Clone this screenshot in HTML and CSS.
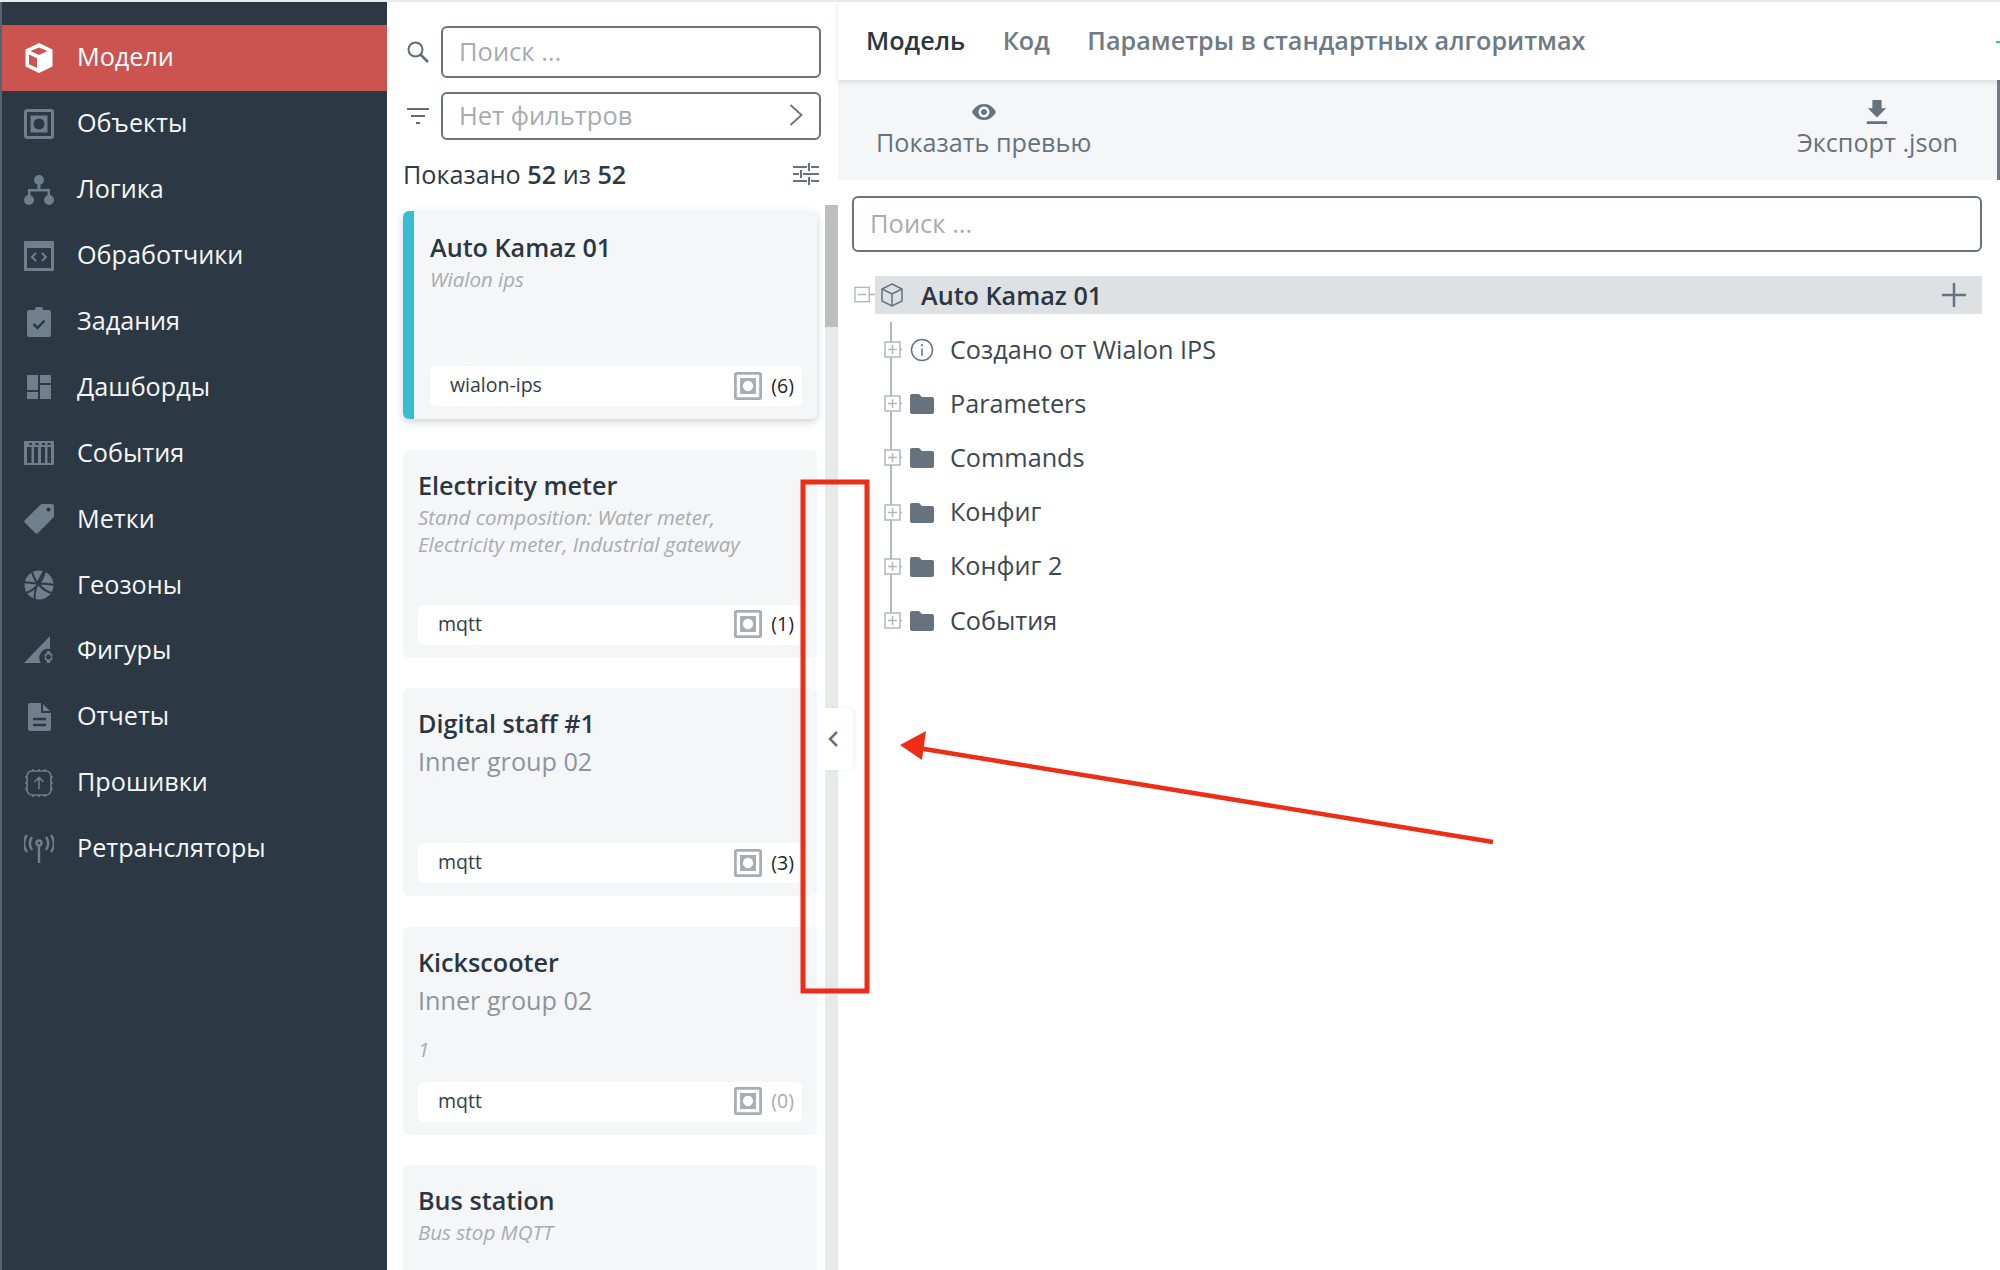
FILE: index.html
```html
<!DOCTYPE html>
<html lang="ru">
<head>
<meta charset="utf-8">
<title>Модели</title>
<link rel="stylesheet" href="styles.css">
</head>
<body>
<svg class="defs" width="0" height="0" aria-hidden="true">
  <symbol id="i-object" viewBox="0 0 30 30">
    <path fill-rule="evenodd" d="M3 0h24a3 3 0 0 1 3 3v24a3 3 0 0 1-3 3H3a3 3 0 0 1-3-3V3a3 3 0 0 1 3-3zm0 3v24h24V3zm3.500 3.500h17v17h-17zM15 9.500a5.500 5.500 0 1 0 .01 0z"/>
  </symbol>
  <symbol id="i-folder" viewBox="0 0 24 20">
    <path d="M2 0h7l3 3h10a2 2 0 0 1 2 2v13a2 2 0 0 1-2 2H2a2 2 0 0 1-2-2V2a2 2 0 0 1 2-2z"/>
  </symbol>
  <symbol id="i-plus" viewBox="0 0 18 18">
    <rect x="1" y="1" width="15" height="15" fill="#fff" stroke="#b4b8bc" stroke-width="1.500"/>
    <path d="M4 8.500h9M8.500 4v9M16 8.500h2" fill="none" stroke="#b4b8bc" stroke-width="1.500"/>
  </symbol>
</svg>

<div class="app">
  <nav class="sidebar">
    <a class="nav-item active"><svg class="nav-icon" viewBox="0 0 30 30"><path fill-rule="evenodd" d="M15 0l13.500 6.500v17L15 30 1.500 23.500v-17zM6.500 8L15 12l8.500-4L15 4.500zM5 11.500v9.800l8 3.800v-9.800z"/></svg><span>Модели</span></a>
    <a class="nav-item"><svg class="nav-icon"><use href="#i-object"/></svg><span>Объекты</span></a>
    <a class="nav-item"><svg class="nav-icon" viewBox="0 0 30 30"><circle cx="15" cy="5" r="5"/><circle cx="5" cy="25" r="5"/><circle cx="25" cy="25" r="5"/><path d="M13.500 8h3v6H26v8h-2.500v-5.500h-17V22H4v-8h9.500z"/></svg><span>Логика</span></a>
    <a class="nav-item"><svg class="nav-icon" viewBox="0 0 30 30"><path fill-rule="evenodd" d="M1 0h28a1 1 0 0 1 1 1v28a1 1 0 0 1-1 1H1a1 1 0 0 1-1-1V1a1 1 0 0 1 1-1zm2 7v20h24V7z"/><path class="line" d="M12 12l-4 4 4 4M18 12l4 4-4 4"/></svg><span>Обработчики</span></a>
    <a class="nav-item"><svg class="nav-icon" viewBox="0 0 30 30"><path d="M5 3h6a4 4 0 0 1 8 0h6a2 2 0 0 1 2 2v23a2 2 0 0 1-2 2H5a2 2 0 0 1-2-2V5a2 2 0 0 1 2-2z"/><path class="cut" d="M9.500 17l4 4 7-7.500"/></svg><span>Задания</span></a>
    <a class="nav-item"><svg class="nav-icon" viewBox="0 0 30 30"><path d="M3 3h11v15H3zM16 3h11v8H16zM16 13h11v14H16zM3 20h11v7H3z"/></svg><span>Дашборды</span></a>
    <a class="nav-item"><svg class="nav-icon" viewBox="0 0 30 30"><path fill-rule="evenodd" d="M1 3h28a1 1 0 0 1 1 1v22a1 1 0 0 1-1 1H1a1 1 0 0 1-1-1V4a1 1 0 0 1 1-1zm2 6v16h4.500V9zm7 0v16h4V9zm7 0v16h4V9zm6.500 0v16H27V9zM5 5v2h3V5zm6.500 0v2h3V5zm6.500 0v2h3V5zm5.500 0v2h3V5z"/></svg><span>События</span></a>
    <a class="nav-item"><svg class="nav-icon" viewBox="0 0 30 30"><path fill-rule="evenodd" d="M18 0h10a2 2 0 0 1 2 2v10a2 2 0 0 1-.6 1.400L14 29a2 2 0 0 1-2.800 0L1 18.800a2 2 0 0 1 0-2.800L16.600.6A2 2 0 0 1 18 0zm6.500 3.500a2 2 0 1 0 .01 0z"/></svg><span>Метки</span></a>
    <a class="nav-item"><svg class="nav-icon" viewBox="0 0 30 30"><circle cx="15" cy="15" r="14.500"/><path class="cut thin" d="M2 23C11 20 19 11 21 1M8 2c2 8 10 19 20 21M0 12c8 2 21 1 30 3M11 30c-2-8 4-21 9-29"/></svg><span>Геозоны</span></a>
    <a class="nav-item"><svg class="nav-icon" viewBox="0 0 30 30"><path d="M26 0v13a9 9 0 0 0-9 14H0z"/><path fill-rule="evenodd" d="M23 15h3l.6 2.500 2 1-.8 2.500.8 2.500-2 1L26 27h-3l-.6-2.500-2-1 .8-2.500-.8-2.500 2-1zm1.500 3.500a2.500 2.500 0 1 0 .01 0z"/></svg><span>Фигуры</span></a>
    <a class="nav-item"><svg class="nav-icon" viewBox="0 0 30 30"><path d="M6 1h12l9 9v17a2 2 0 0 1-2 2H6a2 2 0 0 1-2-2V3a2 2 0 0 1 2-2z"/><path class="cut" d="M9 17h13M9 23h13"/><path class="cut thin" d="M18 1v9h9"/></svg><span>Отчеты</span></a>
    <a class="nav-item"><svg class="nav-icon outline" viewBox="0 0 30 30"><rect x="3" y="3" width="24" height="24" rx="5"/><path d="M15 21V10M10.500 14l4.500-4.500 4.500 4.500M9 1v2M15 1v2M21 1v2M9 27v2M15 27v2M21 27v2M1 9h2M1 15h2M1 21h2M27 9h2M27 15h2M27 21h2"/></svg><span>Прошивки</span></a>
    <a class="nav-item"><svg class="nav-icon outline thick" viewBox="0 0 30 30"><circle cx="15" cy="9" r="2.500"/><path d="M15 11v18M8 3c-3 4-3 8 0 13M22 3c3 4 3 8 0 13M3 1C-1 6-1 13 3 18M27 1c4 5 4 12 0 17"/></svg><span>Ретрансляторы</span></a>
  </nav>

  <section class="list">
    <div class="field-row">
      <svg class="field-icon" viewBox="0 0 24 24"><circle cx="9.500" cy="9.500" r="7"/><path d="M14.500 14.500L22 22" stroke-width="2.500"/></svg>
      <div class="field search">Поиск ...</div>
    </div>
    <div class="field-row filter-row">
      <svg class="field-icon" viewBox="0 0 24 24"><path d="M1 5h22M5 12h14M10 19h4"/></svg>
      <div class="field filter">Нет фильтров<svg class="chevron" viewBox="0 0 14 22"><path d="M1.500 1L12.500 11 1.500 21"/></svg></div>
    </div>
    <div class="count-row">
      <span>Показано <b>52</b> из <b>52</b></span>
      <svg class="sliders" viewBox="0 0 26 24"><path d="M0 5h14M18 5h8M16 1v8M0 12h6M10 12h16M8 8v8M0 19h14M18 19h8M16 15v8"/></svg>
    </div>
    <div class="cards-area">
      <div class="cards">
        <article class="card selected">
          <h3>Auto Kamaz 01</h3>
          <p class="desc">Wialon ips</p>
          <div class="card-foot"><span>wialon-ips</span><svg class="obj"><use href="#i-object"/></svg><span class="num">(6)</span></div>
        </article>
        <article class="card">
          <h3>Electricity meter</h3>
          <p class="desc">Stand composition: Water meter,<br>Electricity meter, Industrial gateway</p>
          <div class="card-foot"><span>mqtt</span><svg class="obj"><use href="#i-object"/></svg><span class="num">(1)</span></div>
        </article>
        <article class="card">
          <h3>Digital staff #1</h3>
          <p class="group">Inner group 02</p>
          <div class="card-foot"><span>mqtt</span><svg class="obj"><use href="#i-object"/></svg><span class="num">(3)</span></div>
        </article>
        <article class="card">
          <h3>Kickscooter</h3>
          <p class="group">Inner group 02</p>
          <p class="desc note">1</p>
          <div class="card-foot"><span>mqtt</span><svg class="obj"><use href="#i-object"/></svg><span class="num zero">(0)</span></div>
        </article>
        <article class="card">
          <h3>Bus station</h3>
          <p class="desc">Bus stop MQTT</p>
        </article>
      </div>
      <div class="scrollbar"><div class="thumb"></div></div>
    </div>
    <button class="collapse" type="button"><svg viewBox="0 0 12 18"><path d="M10 2L3 9l7 7"/></svg></button>
  </section>

  <main class="main">
    <div class="tabs">
      <span class="tab current">Модель</span>
      <span class="tab">Код</span>
      <span class="tab">Параметры в стандартных алгоритмах</span>
      <i class="tick"></i>
    </div>
    <div class="toolbar">
      <div class="tool">
        <svg class="tool-icon" viewBox="0 0 24 16"><path fill-rule="evenodd" d="M12 0c5.500 0 9.500 3.500 12 8-2.500 4.500-6.500 8-12 8S2.500 12.500 0 8c2.500-4.500 6.500-8 12-8zm0 2.500a5.500 5.500 0 1 0 .01 0zM12 5a3 3 0 1 1-.01 0z"/></svg>
        <span>Показать превью</span>
      </div>
      <div class="tool">
        <svg class="tool-icon" viewBox="0 0 22 26"><path d="M6 0h10v9h5L11 19 1 9h5zM0 23h22v3H0z"/></svg>
        <span>Экспорт .json</span>
      </div>
    </div>
    <div class="field main-search">Поиск ...</div>
    <div class="tree">
      <div class="tree-root">
        <svg class="root-toggle" viewBox="0 0 22 18"><rect x="1" y="1" width="15" height="15" fill="none" stroke="#b4b8bc" stroke-width="1.500"/><path d="M4 8.500h9M16 8.500h6" fill="none" stroke="#b4b8bc" stroke-width="1.500"/></svg>
        <div class="root-row">
          <svg class="cube" viewBox="0 0 24 24"><path d="M12 1l10 5v12l-10 5-10-5V6zM2 6l10 5 10-5M12 11v12"/></svg>
          <span class="root-title">Auto Kamaz 01</span>
          <svg class="add" viewBox="0 0 24 24"><path d="M12 0v24M0 12h24"/></svg>
        </div>
      </div>
      <ul class="children">
        <li class="node"><svg class="toggle"><use href="#i-plus"/></svg><svg class="node-icon info" viewBox="0 0 24 24"><circle cx="12" cy="12" r="10.500"/><path d="M12 10.500V18M12 6v2.500"/></svg><span>Создано от Wialon IPS</span></li>
        <li class="node"><svg class="toggle"><use href="#i-plus"/></svg><svg class="node-icon folder"><use href="#i-folder"/></svg><span>Parameters</span></li>
        <li class="node"><svg class="toggle"><use href="#i-plus"/></svg><svg class="node-icon folder"><use href="#i-folder"/></svg><span>Commands</span></li>
        <li class="node"><svg class="toggle"><use href="#i-plus"/></svg><svg class="node-icon folder"><use href="#i-folder"/></svg><span>Конфиг</span></li>
        <li class="node"><svg class="toggle"><use href="#i-plus"/></svg><svg class="node-icon folder"><use href="#i-folder"/></svg><span>Конфиг 2</span></li>
        <li class="node"><svg class="toggle"><use href="#i-plus"/></svg><svg class="node-icon folder"><use href="#i-folder"/></svg><span>События</span></li>
      </ul>
    </div>
  </main>
</div>

<svg class="annotation" viewBox="0 0 2000 1270" aria-hidden="true">
  <rect x="803" y="482" width="64" height="509" fill="none" stroke="#ee2d17" stroke-width="5"/>
  <path d="M1493 842L918 748" fill="none" stroke="#ee2d17" stroke-width="4.500"/>
  <path d="M900 745L926 731 922 760z" fill="#ee2d17"/>
</svg>
</body>
</html>
```

FILE: styles.css
```css
* { box-sizing: border-box; }
html, body { height: 100%; }
body {
  margin: 0;
  overflow: hidden;
  background: #fff;
  font-family: "Open Sans", "Noto Sans", sans-serif;
  color: #2d3945;
}
.defs { position: absolute; }
.app {
  display: flex;
  height: 1270px;
  border-top: 2px solid #e9ebec;
}

/* sidebar */
.sidebar {
  width: 387px;
  flex: none;
  padding-top: 23px;
  background: #2c3844;
  border-left: 2px solid #566472;
}
.nav-item {
  display: flex;
  align-items: center;
  gap: 23px;
  height: 65.900px;
  padding-left: 22px;
  color: #f4f6f7;
  font-size: 25.200px;
}
.nav-item span { margin-top: -3px; }
.nav-item.active { background: #cb5450; color: #fff; }
.nav-icon {
  width: 30px;
  height: 30px;
  flex: none;
  fill: #6f7f8d;
}
.nav-icon .line { fill: none; stroke: #6f7f8d; stroke-width: 2; }
.nav-icon .cut { fill: none; stroke: #2c3844; stroke-width: 2.500; }
.nav-icon .cut.thin { stroke-width: 2; }
.nav-icon.outline { fill: none; stroke: #6f7f8d; stroke-width: 1.600; }
.nav-icon.thick { stroke-width: 2.400; }
.active .nav-icon { fill: #fff; }

/* list column */
.list {
  position: relative;
  display: flex;
  flex-direction: column;
  width: 451px;
  flex: none;
}
.field-row {
  display: flex;
  align-items: center;
  gap: 11px;
  margin: 24px 17px 0 19px;
}
.filter-row { margin-top: 14px; }
.field-icon {
  width: 24px;
  height: 24px;
  flex: none;
  fill: none;
  stroke: #5f6c78;
  stroke-width: 2;
}
.field {
  display: flex;
  align-items: center;
  border: 2.500px solid #66737f;
  border-radius: 6px;
  padding: 0 0 2px 16px;
  color: #a7acb1;
  font-size: 25.500px;
  background: #fff;
}
.search { flex: 1; height: 52px; }
.filter { flex: 1; height: 48px; justify-content: space-between; padding-right: 16px; }
.chevron { width: 14px; height: 22px; fill: none; stroke: #66737f; stroke-width: 1.800; }
.count-row {
  display: flex;
  align-items: center;
  justify-content: space-between;
  height: 32px;
  margin: 19px 19px 0 16px;
  font-size: 25.200px;
  color: #2d3945;
}
.count-row span { margin-top: -3px; }
.count-row b { font-weight: 600; }
.sliders { width: 26px; height: 24px; fill: none; stroke: #66737f; stroke-width: 2; margin-top: -2px; }
.cards-area {
  display: flex;
  flex: 1;
  min-height: 0;
  margin-top: 14px;
  overflow: hidden;
}
.cards {
  display: flex;
  flex-direction: column;
  gap: 30.500px;
  width: 430px;
  padding: 6px 0 0 16px;
  flex: none;
}
.card {
  display: flex;
  flex-direction: column;
  flex: none;
  height: 208px;
  padding: 19px 15px 13px;
  background: #f4f6f8;
  border-radius: 6px;
}
.card.selected {
  border-left: 11px solid #38bcd4;
  padding: 20px 15px 13px 16px;
  box-shadow: 0 3px 8px rgba(40, 50, 60, .22);
}
.card h3 {
  margin: 0;
  font-size: 25.200px;
  line-height: 33px;
  font-weight: 600;
  color: #2b3642;
}
.desc {
  margin: 2px 0 0;
  font-size: 20.500px;
  line-height: 27px;
  font-style: italic;
  color: #a7acb1;
}
.group {
  margin: 3px 0 0;
  font-size: 25.200px;
  line-height: 36px;
  color: #8c959c;
}
.note { margin-top: 18px; }
.card-foot {
  display: flex;
  align-items: center;
  height: 40px;
  margin-top: auto;
  padding: 0 8px 0 20px;
  background: #fff;
  border-radius: 6px;
  font-size: 19.500px;
  color: #333d47;
}
.card-foot span:first-child { flex: 1; margin-top: -3px; }
.obj { width: 28px; height: 28px; fill: #a6aeb3; margin-top: -1px; }
.num { width: 26px; margin: -2px 0 0 6px; font-size: 19.500px; text-align: right; color: #20262c; }
.num.zero { color: #a7acb1; }
.scrollbar {
  width: 13px;
  margin-left: 8px;
  flex: none;
  background: #e7e9ea;
}
.thumb { height: 122px; background: #bcbfc1; }
.collapse {
  position: absolute;
  left: 438px;
  top: 706px;
  width: 28px;
  height: 62px;
  padding: 0 0 0 2px;
  display: flex;
  align-items: center;
  border: 0;
  border-radius: 0 6px 6px 0;
  background: #fff;
  box-shadow: 2px 0 4px rgba(40, 50, 60, .06);
}
.collapse svg { width: 12px; height: 18px; fill: none; stroke: #66737f; stroke-width: 2.500; }

/* main column */
.main {
  display: flex;
  flex-direction: column;
  flex: 1;
  min-width: 0;
}
.tabs {
  position: relative;
  display: flex;
  align-items: center;
  gap: 37.500px;
  height: 78px;
  flex: none;
  padding: 0 0 2px 28px;
  background: #fff;
  box-shadow: 0 2px 5px rgba(40, 50, 60, .14);
  font-size: 25.200px;
  font-weight: 600;
  color: #6e7a85;
}
.tab.current { color: #2b3642; }
.tick {
  position: absolute;
  right: 0;
  top: 39px;
  width: 4px;
  height: 2px;
  background: #38bcd4;
}
.toolbar {
  display: flex;
  justify-content: space-between;
  height: 100px;
  flex: none;
  padding: 20px 39px 0 38px;
  background: #f4f6f8;
  border-right: 3px solid #6e7b87;
}
.tool {
  display: flex;
  flex-direction: column;
  align-items: center;
  font-size: 25.200px;
  line-height: 33px;
  color: #66727d;
}
.tool-icon { height: 24px; width: 24px; fill: #66737f; margin-bottom: 2px; }
.main-search {
  height: 56px;
  margin: 16px 18px 0 14px;
  flex: none;
}

/* tree */
.tree { margin: 24px 18px 0 16px; }
.tree-root { display: flex; align-items: center; }
.root-toggle { width: 21px; height: 18px; flex: none; }
.root-row {
  display: flex;
  align-items: center;
  flex: 1;
  height: 38px;
  padding: 0 16px 0 5px;
  background: #dee1e4;
}
.cube { width: 24px; height: 24px; fill: none; stroke: #66737f; stroke-width: 1.500; flex: none; }
.root-title { flex: 1; margin-left: 17px; font-size: 25.200px; font-weight: 600; color: #2b3642; }
.add { width: 24px; height: 24px; fill: none; stroke: #66737f; stroke-width: 2.500; }
.children {
  position: relative;
  list-style: none;
  margin: 0;
  padding: 9px 0 0 30px;
}
.children::before {
  content: "";
  position: absolute;
  left: 36px;
  top: 8px;
  bottom: 27px;
  width: 1.500px;
  background: #b4b8bc;
}
.node {
  position: relative;
  display: flex;
  align-items: center;
  height: 54.200px;
  font-size: 25.200px;
  color: #3c4751;
}
.node span { margin-top: -3px; }
.toggle { width: 18px; height: 18px; flex: none; }
.node-icon { width: 24px; flex: none; margin-left: 8px; margin-right: 16px; }
.folder { height: 20px; fill: #66737f; }
.info { height: 24px; fill: none; stroke: #66737f; stroke-width: 1.500; }

/* annotation drawn over the screenshot */
.annotation {
  position: absolute;
  left: 0;
  top: 0;
  width: 2000px;
  height: 1270px;
  pointer-events: none;
}
```
